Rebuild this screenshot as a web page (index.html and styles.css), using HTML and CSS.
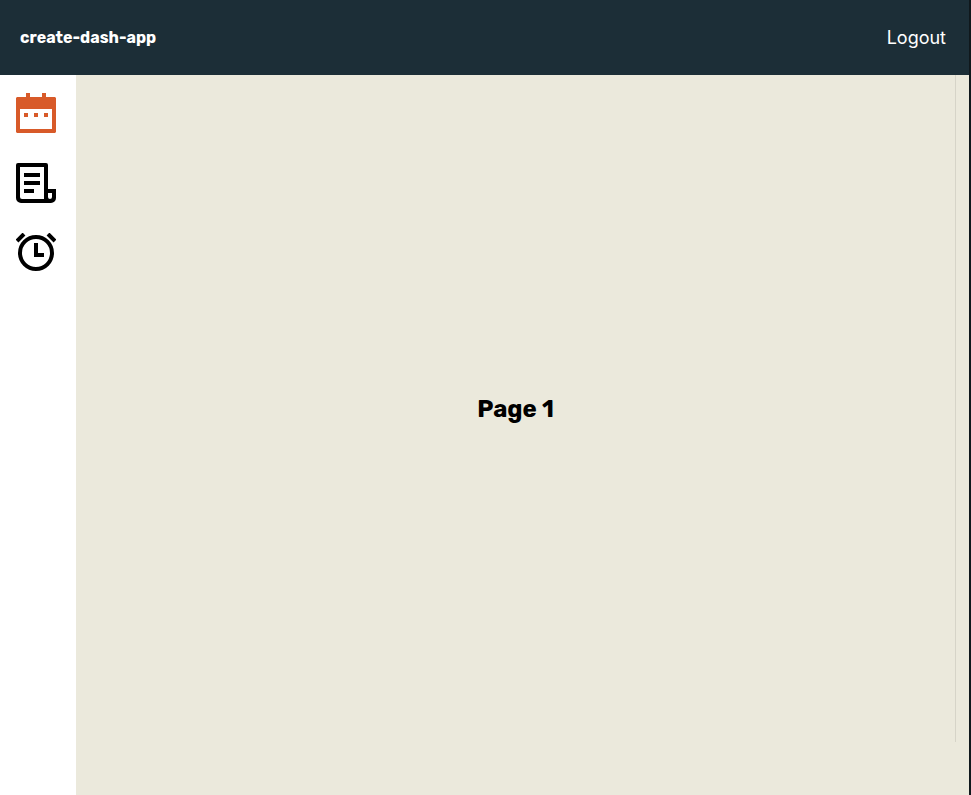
FILE: index.html
```html
<!DOCTYPE html>
<html lang="en">
<head>
<meta charset="utf-8">
<meta name="viewport" content="width=device-width, initial-scale=1">
<title>create-dash-app</title>
<link rel="stylesheet" href="styles.css">
</head>
<body>
<div class="app">
  <header class="topbar">
    <a class="brand" href="#">create-dash-app</a>
    <button class="logout" type="button">Logout</button>
  </header>
  <div class="body">
    <nav class="sidebar" aria-label="Main">
      <a class="nav-link active" href="#page1" aria-label="Page 1">
        <svg viewBox="0 0 40 40" fill="currentColor"><path fill-rule="evenodd" d="M10 0h4v4h12V0h4v4h9l1 1v34l-1 1H1l-1-1V5l1-1h9zM4 16v20h32V16z"/><path d="M8 20h4v4H8zM18 20h4v4h-4zM28 20h4v4h-4z"/></svg>
      </a>
      <a class="nav-link" href="#page2" aria-label="Page 2">
        <svg viewBox="0 0 40 40" fill="currentColor"><path fill-rule="evenodd" d="M2 0h28a2 2 0 0 1 2 2v24h8v9a5 5 0 0 1-5 5H5a5 5 0 0 1-5-5V2a2 2 0 0 1 2-2zM4 4v30a2 2 0 0 0 2 2h22V4zM32 30v4a2 2 0 0 0 4 0v-4z"/><path d="M8 10h16v4H8zM8 18h16v4H8zM8 26h10v4H8z"/></svg>
      </a>
      <a class="nav-link" href="#page3" aria-label="Page 3">
        <svg viewBox="0 0 40 40" fill="none" stroke="currentColor" stroke-width="4"><circle cx="20" cy="20" r="16"/><path d="M20 10v12h8M1 8l7-7M32 1l7 7"/></svg>
      </a>
    </nav>
    <main class="content">
      <section class="page"><h1>Page 1</h1></section>
    </main>
  </div>
</div>
</body>
</html>
```
FILE: styles.css
```css
* {
  box-sizing: border-box;
}

body {
  margin: 0;
  background: #fff;
  font-family: Rubik, Roboto, sans-serif;
  color: #000;
}

.app {
  display: flex;
  flex-direction: column;
  min-height: 100vh;
  border-right: 2px solid #10181c;
}

.topbar {
  display: flex;
  align-items: center;
  justify-content: space-between;
  height: 75px;
  padding: 0 23px 0 20px;
  background: #1c2e37;
}

.brand {
  color: #fff;
  font-size: 16px;
  font-weight: 700;
  text-decoration: none;
}

.logout {
  padding: 0;
  border: 0;
  background: none;
  color: #fff;
  font-family: Inter, sans-serif;
  font-size: 18px;
  cursor: pointer;
}

.body {
  display: flex;
  flex: 1;
}

.sidebar {
  display: flex;
  flex-direction: column;
  gap: 30px;
  width: 76px;
  padding: 18px 16px;
}

.nav-link {
  display: block;
  width: 40px;
  height: 40px;
  color: #000;
}

.nav-link.active {
  color: #d85a29;
}

.nav-link svg {
  display: block;
}

.content {
  display: flex;
  flex: 1;
  padding: 0 13px 53px 0;
  background: #ebe9dc;
}

.page {
  display: flex;
  flex: 1;
  align-items: center;
  justify-content: center;
  border-right: 1px solid #d6d4c8;
}

h1 {
  margin: 0;
  font-size: 24px;
  font-weight: 700;
}
```
